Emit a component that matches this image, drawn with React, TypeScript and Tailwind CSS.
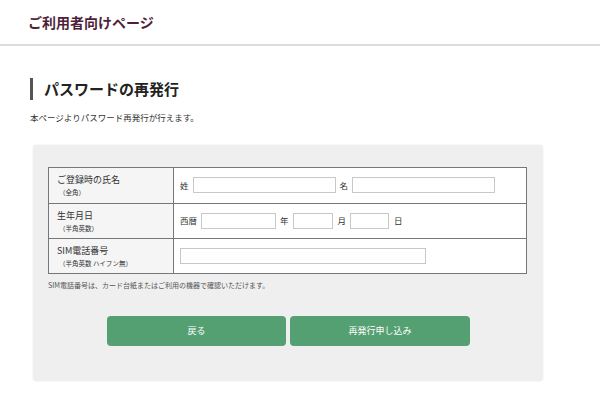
import React from "react";

const inp = "h-[16px] border border-[#c8c8c8] bg-white";

export default function App() {
  return (
    <div className="w-[600px] h-[400px] bg-white text-[#333] overflow-hidden" style={{ fontFamily: '"Noto Sans CJK JP", "Noto Sans", sans-serif' }}>
      <div className="h-[46px] border-b-2 border-[#dcdcdc] pl-[28px] pt-[9px]">
        <span className="text-[14px] font-bold text-[#4f1f3a]">ご利用者向けページ</span>
      </div>
      <div className="mt-[32px] ml-[30px] border-l-[3px] border-[#555] h-[22px] flex items-center pl-[11px]">
        <span className="text-[15px] font-bold text-[#222]">パスワードの再発行</span>
      </div>
      <div className="ml-[30px] mt-[13px] text-[8.5px] leading-none">本ページよりパスワード再発行が行えます。</div>
      <div className="ml-[33px] mt-[23px] w-[510px] h-[236px] bg-[#efefef] rounded-sm shadow-[0_0_2px_rgba(0,0,0,0.1)] pt-[22px] px-[15px]">
        <div className="w-[479px] border border-[#777] bg-white text-[8.5px]">
          {[
            ["ご登録時の氏名", "（全角）"],
            ["生年月日", "（半角英数）"],
            ["SIM電話番号", "（半角英数 ハイフン無）"],
          ].map(([a, b], i) => (
            <div key={i} className={`flex h-[35px] ${i > 0 ? "border-t border-[#777]" : ""}`}>
              <div className="w-[125px] border-r border-[#777] bg-[#f5f5f5] pl-[8px] pt-[5px] leading-[13px]">
                <div className="text-[9px]">{a}</div>
                <div className="text-[6.5px] pl-[2px]">{b}</div>
              </div>
              <div className="flex-1 flex items-center pl-[6px] gap-[4px]">
                {i === 0 && (<>
                  <span>姓</span><div className={`${inp} w-[143px]`} />
                  <span>名</span><div className={`${inp} w-[143px]`} />
                </>)}
                {i === 1 && (<>
                  <span>西暦</span><div className={`${inp} w-[75px]`} />
                  <span>年</span><div className={`${inp} w-[40px]`} />
                  <span className="ml-[1px]">月</span><div className={`${inp} w-[39px]`} />
                  <span className="ml-[1px]">日</span>
                </>)}
                {i === 2 && <div className={`${inp} w-[246px]`} />}
              </div>
            </div>
          ))}
        </div>
        <div className="mt-[6px] text-[7px] text-[#555]">SIM電話番号は、カード台紙またはご利用の機器で確認いただけます。</div>
        <div className="mt-[26px] flex gap-[4px] pl-[59px]">
          <button className="w-[179px] h-[30px] bg-[#55a073] text-white text-[9px] rounded-sm">戻る</button>
          <button className="w-[180px] h-[30px] bg-[#55a073] text-white text-[9px] rounded-sm">再発行申し込み</button>
        </div>
      </div>
    </div>
  );
}
